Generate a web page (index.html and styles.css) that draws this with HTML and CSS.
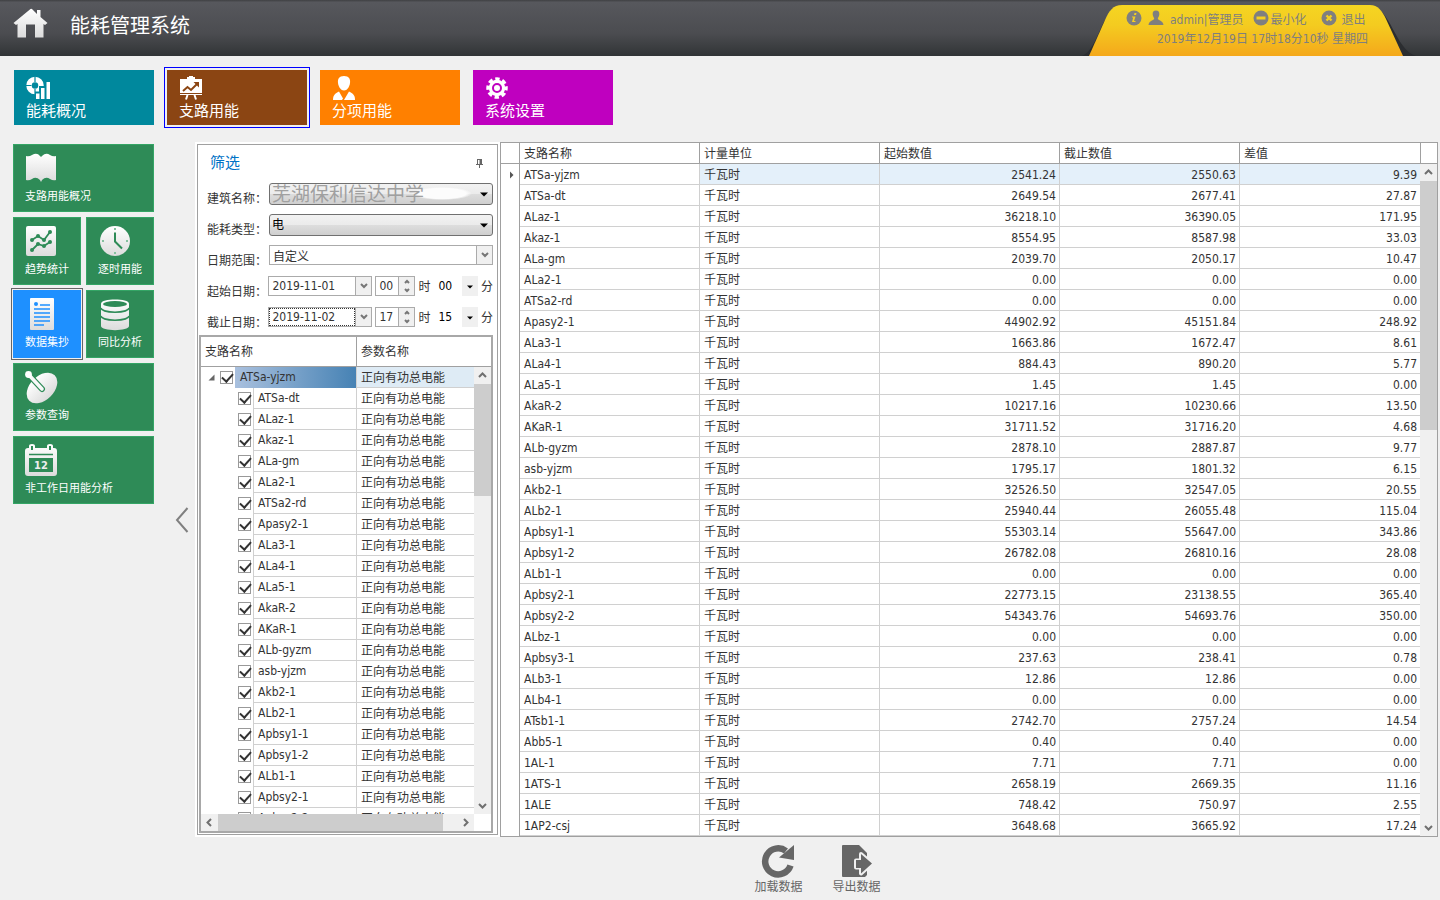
FILE: index.html
```html
<!DOCTYPE html>
<html lang="zh-CN">
<head>
    <meta charset="UTF-8">
    <meta name="viewport" content="width=device-width, initial-scale=1.0">
    <title>能耗管理系统</title>
    <link rel="stylesheet" href="styles.css">
</head>
<body>
    <svg class="defs" width="0" height="0">
        <defs>
            <linearGradient id="silver" x1="0" y1="0" x2="0" y2="1">
                <stop offset="0" stop-color="#ffffff"/>
                <stop offset="1" stop-color="#dcdcdc"/>
            </linearGradient>
            <linearGradient id="gold" x1="0" y1="0" x2="0" y2="1">
                <stop offset="0" stop-color="#f5d522"/>
                <stop offset="0.4" stop-color="#f4cb20"/>
                <stop offset="1" stop-color="#f4a81b"/>
            </linearGradient>
        </defs>
    </svg>

    <!-- Header -->
    <header class="header">
        <svg class="home" width="36" height="32" viewBox="0 0 36 32">
            <path d="M17.500 1L0.500 15L3 17L4.500 16V29.500H13V16.500H22V29.500H30.500V16L32 17L34.500 15L27.500 9V2H24V6L19.500 1.500Q18.500 0.500 17.500 1Z" fill="url(#silver)"/>
        </svg>
        <h1>能耗管理系统</h1>
        <div class="user">
            <svg class="user-bg" width="354" height="51" viewBox="0 0 354 51">
                <path d="M2 51C20 44 20 2 44 0H288C312 2 314 44 336 51Z" fill="#2b2d30"/>
                <path d="M9 51L25 15C29 6 33 0 42 0H290C298 0 302 6 306 14L323 51Z" fill="url(#gold)"/>
            </svg>
            <div class="user-line">
                <svg width="16" height="16" viewBox="0 0 16 16"><circle cx="8" cy="8" r="7.500" fill="#7f7f7f"/><path d="M8.500 3h2l-.5 2H8zM6 6.500h3.500L8 11h1.500v1H6L7.200 7.500H6z" fill="#f4cf21"/></svg>
                <svg width="16" height="16" viewBox="0 0 16 16"><path d="M8 0.500C10.500 0.500 11.500 2 11.300 4.500C11.100 6.500 10 7.500 9.800 8.500C10 10.500 15 10.500 15.500 15H0.500C1 10.500 6 10.500 6.200 8.500C6 7.500 4.900 6.500 4.700 4.500C4.500 2 5.500 0.500 8 0.500Z" fill="#7f7f7f"/></svg>
                <span class="user-name">admin|管理员</span>
                <button class="user-btn">
                    <svg width="16" height="16" viewBox="0 0 16 16"><circle cx="8" cy="8" r="7.500" fill="#7f7f7f"/><path d="M3.500 6.500h9v3h-9z" fill="#f4cf21"/></svg>最小化
                </button>
                <button class="user-btn exit">
                    <svg width="16" height="16" viewBox="0 0 16 16"><circle cx="8" cy="8" r="7.500" fill="#7f7f7f"/><path d="M5.500 5.500l5 5M10.500 5.500l-5 5" stroke="#f4cf21" stroke-width="2.400"/></svg>退出
                </button>
            </div>
            <div class="user-date">2019年12月19日 17时18分10秒 星期四</div>
        </div>
    </header>

    <!-- Top tiles -->
    <nav class="nav">
        <button class="nav-tile teal">
            <svg width="26" height="24" viewBox="0 0 26 24">
                <circle cx="9" cy="9.500" r="6" fill="none" stroke="#fff" stroke-width="5.500"/>
                <path d="M9 0V6M0 9.500H5.500M9 13V19" stroke="#00889d" stroke-width="1.200"/>
                <path d="M9 24V15.500H13V10H18V5H26V24Z" fill="#00889d"/>
                <path d="M10 17.500h3.500V23H10zM15 12h3.500v11H15zM20.500 6H24v17h-3.500z" fill="#fff"/>
            </svg>
            能耗概况
        </button>
        <button class="nav-tile brown active">
            <svg width="26" height="24" viewBox="0 0 26 24">
                <path d="M10 0h4v1h2v2h7v16H1V3h7V1h2z" fill="#fff"/>
                <path d="M4 15l4.500-4 3.500 3 6-6" fill="none" stroke="#8b4513" stroke-width="2"/>
                <path d="M14.500 6h5.500v5.500z" fill="#8b4513"/>
                <path d="M1 17.500h22" stroke="#8b4513"/>
                <path d="M8.500 19L7 23.500M15.500 19L17 23.500" stroke="#fff" stroke-width="2"/>
            </svg>
            支路用能
        </button>
        <button class="nav-tile orange">
            <svg width="26" height="24" viewBox="0 0 26 24">
                <path d="M12 0C17 0 18.500 3 18 7C17.500 11 15 14.500 12 14.500S6.500 11 6 7C5.500 3 7 0 12 0Z" fill="#fff"/>
                <path d="M7 15.500L11 22.500L10 24H1C1 19 3 17.500 7 15.500ZM17 15.500L12 24H23C23 19 21 17.500 17 15.500Z" fill="#fff"/>
            </svg>
            分项用能
        </button>
        <button class="nav-tile purple">
            <svg width="26" height="24" viewBox="0 0 26 24">
                <circle cx="12" cy="12" r="9" fill="none" stroke="#fff" stroke-width="3.500" stroke-dasharray="4.270 2.800" stroke-dashoffset="2"/>
                <circle cx="12" cy="12" r="8.200" fill="#fff"/>
                <circle cx="12" cy="12" r="4" fill="none" stroke="#bf00bf" stroke-width="2"/>
            </svg>
            系统设置
        </button>
    </nav>

    <main class="content">
        <!-- Side menu -->
        <aside class="side">
            <button class="tile wide">
                <svg width="34" height="34" viewBox="0 0 34 34"><path d="M1 4Q4 5 7 3Q12 0 15 4L16 5L17 4Q21 0 25 3Q28 5 31 4V28Q28 29 25 27Q21 24 17 28L16 30L15 28Q11 24 7 27Q4 29 1 28Z" fill="url(#silver)"/></svg>
                支路用能概况
            </button>
            <button class="tile">
                <svg width="34" height="34" viewBox="0 0 34 34">
                    <rect x="1" y="1" width="30" height="30" rx="2" fill="url(#silver)"/>
                    <path d="M7 15L13 11L19 15L25 7M7 25L13 19L19 21L25 17" fill="none" stroke="#2e8b57" stroke-width="1.800"/>
                    <path d="M7 15h.01M13 11h.01M19 15h.01M25 7h.01M7 25h.01M13 19h.01M19 21h.01M25 17h.01" stroke="#2e8b57" stroke-width="4" stroke-linecap="round"/>
                </svg>
                趋势统计
            </button>
            <button class="tile">
                <svg width="34" height="34" viewBox="0 0 34 34">
                    <circle cx="17" cy="16" r="15" fill="url(#silver)"/>
                    <path d="M17 7.500V16.500L24 23.500" fill="none" stroke="#2e8b57" stroke-width="2"/>
                    <path d="M16 3h2v2h-2zM16 27h2v2h-2zM4 15h2v2H4zM28 15h2v2h-2z" fill="#85c19f"/>
                </svg>
                逐时用能
            </button>
            <button class="tile active">
                <svg width="34" height="34" viewBox="0 0 34 34">
                    <rect x="5" y="0" width="24" height="32" rx="1" fill="url(#silver)"/>
                    <circle cx="11" cy="6" r="2" fill="#1e90ff"/>
                    <path d="M15 7h10M9 11h16M9 15h16M9 19h16M9 23h16M9 27h10" stroke="#1e90ff" stroke-width="1.500"/>
                </svg>
                数据集抄
            </button>
            <button class="tile">
                <svg width="34" height="34" viewBox="0 0 34 34">
                    <path d="M3 5.500C3 0 31 0 31 5.500V28C31 33.500 3 33.500 3 28Z" fill="url(#silver)"/>
                    <ellipse cx="17" cy="6" rx="12" ry="3" fill="#2e8b57"/>
                    <path d="M3 10C4 15.500 30 15.500 31 10M3 18C4 23.500 30 23.500 31 18" fill="none" stroke="#2e8b57" stroke-width="1.500"/>
                </svg>
                同比分析
            </button>
            <button class="tile wide">
                <svg width="34" height="34" viewBox="0 0 34 34">
                    <ellipse cx="17" cy="17" rx="18" ry="12" transform="rotate(-45 17 17)" fill="url(#silver)"/>
                    <path d="M3.500 3.500L17 18" stroke="#2e8b57" stroke-width="6" stroke-linecap="round"/>
                    <path d="M3.500 3.500L17 18" stroke="#f8f8f8" stroke-width="3.600" stroke-linecap="round"/>
                    <circle cx="3.500" cy="3.500" r="3.400" fill="#fff"/>
                </svg>
                参数查询
            </button>
            <button class="tile wide">
                <svg width="34" height="34" viewBox="0 0 34 34">
                    <path d="M3 4H4V2Q4 0 7 0T10 2V4H22V2Q22 0 25 0T28 2V4H29Q32 4 32 7V29Q32 32 29 32H3Q0 32 0 29V7Q0 4 3 4Z" fill="url(#silver)"/>
                    <path d="M4 10.500H28" stroke="#2e8b57" stroke-width="1.500"/>
                    <path d="M6 2h2v4H6zM24 2h2v4h-2zM4 14H28V28H4Z" fill="#2e8b57"/>
                    <text class="cal" x="16" y="25" text-anchor="middle">12</text>
                </svg>
                非工作日用能分析
            </button>
        </aside>
        <button class="collapse" aria-label="收起">
            <svg width="14" height="26" viewBox="0 0 14 26"><path d="M12.500 1L2 13L12.500 25" fill="none" stroke="#808080" stroke-width="2"/></svg>
        </button>

        <div class="work">
            <div class="panels">
                <!-- Filter -->
                <section class="filter">
                    <div class="filter-head">
                        <h2>筛选</h2>
                        <svg width="9" height="11" viewBox="0 0 9 11"><path d="M2 1.500h5M2.500 1v5M1 6.500h7M4.500 6v4" fill="none" stroke="#666"/><path d="M4.500 1H7v5H4.500z" fill="#666"/></svg>
                    </div>
                    <form class="form">
                        <div class="row">
                            <label for="building">建筑名称：</label>
                            <div class="select">
                                <select id="building" class="building"><option>芜湖保利信达中学</option></select>
                                <svg width="8" height="5" viewBox="0 0 8 5"><path d="M0 0.500h8L4 4.500z"/></svg>
                            </div>
                        </div>
                        <div class="row">
                            <label for="energy">能耗类型：</label>
                            <div class="select">
                                <select id="energy"><option>电</option></select>
                                <svg width="8" height="5" viewBox="0 0 8 5"><path d="M0 0.500h8L4 4.500z"/></svg>
                            </div>
                        </div>
                        <div class="row">
                            <label for="range">日期范围：</label>
                            <div class="box grow">
                                <input type="text" id="range" value="自定义">
                                <button type="button" class="drop" aria-label="选择"><svg width="8" height="6" viewBox="0 0 8 6"><path d="M1 1l3 3 3-3"/></svg></button>
                            </div>
                        </div>
                        <div class="row">
                            <label for="start">起始日期：</label>
                            <div class="box date">
                                <input type="text" id="start" value="2019-11-01">
                                <button type="button" class="drop" aria-label="选择"><svg width="8" height="6" viewBox="0 0 8 6"><path d="M1 1l3 3 3-3"/></svg></button>
                            </div>
                            <div class="box hour">
                                <input type="text" id="startHour" value="00" aria-label="时">
                                <button type="button" class="drop" aria-label="调整"><svg width="8" height="14" viewBox="0 0 8 14"><path d="M2 4l2-2 2 2M2 10l2 2 2-2"/></svg></button>
                            </div>
                            <span class="unit">时</span>
                            <div class="minute">
                                <select id="startMin" aria-label="分"><option>00</option></select>
                                <svg width="6" height="4" viewBox="0 0 6 4"><path d="M0 0.500h6L3 3.500z"/></svg>
                            </div>
                            <span class="unit">分</span>
                        </div>
                        <div class="row">
                            <label for="end">截止日期：</label>
                            <div class="box date">
                                <input type="text" id="end" class="focused" value="2019-11-02">
                                <button type="button" class="drop" aria-label="选择"><svg width="8" height="6" viewBox="0 0 8 6"><path d="M1 1l3 3 3-3"/></svg></button>
                            </div>
                            <div class="box hour">
                                <input type="text" id="endHour" value="17" aria-label="时">
                                <button type="button" class="drop" aria-label="调整"><svg width="8" height="14" viewBox="0 0 8 14"><path d="M2 4l2-2 2 2M2 10l2 2 2-2"/></svg></button>
                            </div>
                            <span class="unit">时</span>
                            <div class="minute">
                                <select id="endMin" aria-label="分"><option>15</option></select>
                                <svg width="6" height="4" viewBox="0 0 6 4"><path d="M0 0.500h6L3 3.500z"/></svg>
                            </div>
                            <span class="unit">分</span>
                        </div>
                    </form>

                    <!-- Branch tree -->
                    <div class="tree">
                        <div class="tree-body">
                            <table class="tree-table">
                                <thead>
                                    <tr><th class="branch">支路名称</th><th>参数名称</th></tr>
                                </thead>
                                <tbody id="treeRows"></tbody>
                            </table>
                            <div class="scroll-col">
                                <div class="cap"></div>
                                <div class="vbar">
                                    <svg width="9" height="6" viewBox="0 0 9 6"><path d="M1 5l3.500-3.500L8 5"/></svg>
                                    <div class="track"><div class="thumb tree-thumb"></div></div>
                                    <svg width="9" height="6" viewBox="0 0 9 6"><path d="M1 1l3.500 3.500L8 1"/></svg>
                                </div>
                            </div>
                        </div>
                        <div class="hbar">
                            <svg width="6" height="9" viewBox="0 0 6 9"><path d="M5 1L1.500 4.500L5 8"/></svg>
                            <div class="track"><div class="thumb"></div></div>
                            <svg width="6" height="9" viewBox="0 0 6 9"><path d="M1 1l3.500 3.500L1 8"/></svg>
                        </div>
                    </div>
                </section>

                <!-- Data table -->
                <section class="data">
                    <table class="data-table">
                        <thead>
                            <tr><th class="mark"></th><th>支路名称</th><th>计量单位</th><th>起始数值</th><th>截止数值</th><th>差值</th></tr>
                        </thead>
                        <tbody id="dataRows"></tbody>
                    </table>
                    <div class="scroll-col">
                        <div class="cap"></div>
                        <div class="vbar">
                            <svg width="9" height="6" viewBox="0 0 9 6"><path d="M1 5l3.500-3.500L8 5"/></svg>
                            <div class="track"><div class="thumb data-thumb"></div></div>
                            <svg width="9" height="6" viewBox="0 0 9 6"><path d="M1 1l3.500 3.500L8 1"/></svg>
                        </div>
                    </div>
                </section>
            </div>

            <!-- Actions -->
            <footer class="actions">
                <button class="action">
                    <svg width="34" height="34" viewBox="0 0 34 34">
                        <path d="M29.500 21.500A13 13 0 1 1 25 7" fill="none" stroke="#666" stroke-width="6.500"/>
                        <path d="M33 1V16L18 13.500Z" fill="#666"/>
                    </svg>
                    加载数据
                </button>
                <button class="action">
                    <svg width="34" height="34" viewBox="0 0 34 34">
                        <path d="M3 1H19L27 9V31L25 33H3Q2 33 2 32V2Q2 1 3 1Z" fill="#666"/>
                        <path d="M16 16.500H21V10L32 19.500L21 29.500V23.500H16Z" fill="#666" stroke="#f0f0f0" stroke-width="4" stroke-linejoin="round"/>
                        <path d="M16 16H21V10L32 19.500L21 29.500V24H16Z" fill="#666"/>
                    </svg>
                    导出数据
                </button>
            </footer>
        </div>
    </main>

    <script src="script.js"></script>
</body>
</html>
```
FILE: styles.css
```css
* {
    box-sizing: border-box;
}
body {
    display: flex;
    flex-direction: column;
    height: 100vh;
    margin: 0;
    overflow: hidden;
    background: #f0f0f0;
    color: #333;
    font: 12px "DejaVu Sans Condensed", "Noto Sans CJK SC", sans-serif;
}
.defs {
    position: absolute;
}
button, input, select {
    margin: 0;
    padding: 0;
    border: 0;
    border-radius: 0;
    background: none;
    color: inherit;
    font: inherit;
}
svg {
    display: block;
    flex: none;
}

/* header */
.header {
    display: flex;
    flex: none;
    height: 56px;
    padding-left: 13px;
    background: linear-gradient(#3f4043, #57585d 4%, #4b4c50 60%, #313436);
}
.home {
    margin-top: 8px;
}
h1 {
    margin: 0 0 0 21px;
    color: #fff;
    font-size: 20px;
    font-weight: normal;
    line-height: 52px;
}
.user {
    position: relative;
    width: 354px;
    margin: 5px 6px 0 auto;
    color: #7f7f7f;
}
.user-bg {
    position: absolute;
    left: 0;
    top: 0;
}
.user-line {
    position: relative;
    display: flex;
    align-items: center;
    gap: 6px;
    height: 24px;
    padding: 2px 0 0 46px;
}
.user-name {
    margin-right: 4px;
}
.user-btn {
    display: flex;
    align-items: center;
    gap: 1px;
}
.exit {
    gap: 5px;
    margin-left: 8px;
}
.user-date {
    position: relative;
    padding-left: 77px;
    line-height: 20px;
}

/* top tiles */
.nav {
    display: flex;
    flex: none;
    gap: 13px;
    height: 86px;
    padding: 14px 14px 17px;
}
.nav-tile {
    width: 140px;
    height: 55px;
    padding: 2px 12px 0;
    color: #fff;
    font-size: 15px;
    line-height: 22px;
    text-align: left;
}
.teal { background: #00889d; }
.brown { background: #8b4513; }
.orange { background: #ff8000; }
.purple { background: #bf00bf; }
.nav-tile.active {
    outline: 1px solid #00f;
    outline-offset: 2px;
}

/* side menu */
.content {
    display: flex;
    flex: 1;
    min-height: 0;
}
.side {
    display: grid;
    grid-template-columns: 68px 68px;
    grid-auto-rows: 68px;
    gap: 5px;
    width: 154px;
    padding: 2px 0 0 13px;
}
.tile {
    padding: 1px 11px 0;
    border: 1px solid #34a565;
    background: #2e8b57;
    color: #fff;
    font-size: 11px;
    line-height: 18px;
    text-align: left;
    white-space: nowrap;
}
.tile svg {
    margin-bottom: 2px;
}
.wide {
    grid-column: span 2;
}
.tile.active {
    border-color: #1e90ff;
    background: #1e90ff;
    outline: 1px solid #666;
    outline-offset: 1px;
}
.cal {
    fill: #eee;
    font: bold 11px "DejaVu Sans Condensed", sans-serif;
}
.collapse {
    width: 41px;
    padding: 0 0 3px 21px;
}

/* filter panel */
.work {
    display: flex;
    flex: 1;
    flex-direction: column;
    min-width: 0;
}
.panels {
    display: flex;
    flex: 1;
    gap: 2px;
    min-height: 0;
    padding-right: 2px;
}
.filter {
    display: flex;
    flex-direction: column;
    width: 301px;
    margin: 2px 0 2px 2px;
    padding: 0 1px 1px;
    border: 1px solid #a0a0a0;
    background: #fff;
    outline: 2px solid #fff;
}
.filter-head {
    display: flex;
    flex: none;
    align-items: center;
    justify-content: space-between;
    height: 38px;
    padding: 0 12px 2px 11px;
}
h2 {
    margin: 0;
    color: #0072c6;
    font-size: 15px;
    font-weight: normal;
    line-height: 22px;
}
.form {
    display: flex;
    flex: none;
    flex-direction: column;
    gap: 9px;
    padding: 0 3px 6px 8px;
}
.row {
    display: flex;
    height: 22px;
}
.row label {
    width: 62px;
    line-height: 32px;
    white-space: nowrap;
}
.select {
    position: relative;
    flex: 1;
}
.select select {
    appearance: none;
    width: 100%;
    height: 22px;
    padding-left: 2px;
    border: 1px solid #707070;
    border-radius: 3px;
    background: linear-gradient(#f2f2f2, #ebebeb 50%, #ddd 51%, #cfcfcf);
    color: #000;
}
.select .building {
    background: radial-gradient(closest-side, #fcfcfc 80%, transparent) 142px 3px / 60px 13px no-repeat, linear-gradient(#f2f2f2, #ebebeb 50%, #ddd 51%, #cfcfcf);
    color: #a0a0a0;
    font-size: 19px;
    line-height: 20px;
}
.select svg {
    position: absolute;
    right: 5px;
    top: 9px;
    pointer-events: none;
}
.box {
    display: flex;
    height: 20px;
    border: 1px solid #ababab;
    background: #fff;
}
.box input {
    flex: 1;
    min-width: 0;
    padding-left: 3px;
}
.box .focused {
    outline: 1px dotted #333;
    outline-offset: -1px;
}
.grow {
    flex: 1;
}
.date {
    width: 104px;
}
.hour {
    width: 40px;
    margin-left: 3px;
}
.drop {
    display: flex;
    align-items: center;
    justify-content: center;
    width: 16px;
    border-left: 1px solid #ababab;
    background: #f0f0f0;
}
.drop path {
    fill: none;
    stroke: #777;
    stroke-width: 2;
}
.unit {
    margin-left: 3px;
    line-height: 22px;
}
.minute {
    position: relative;
    width: 45px;
    margin-left: 3px;
}
.minute select {
    appearance: none;
    width: 100%;
    height: 20px;
    padding-left: 5px;
    background: linear-gradient(90deg, transparent 29px, #f0f0f0 29px);
    color: #000;
}
.minute svg {
    position: absolute;
    right: 5px;
    top: 9px;
    pointer-events: none;
}

/* tree */
.tree {
    display: flex;
    flex: 1;
    flex-direction: column;
    min-height: 0;
    margin-right: 3px;
    border: 2px solid #a8a8a8;
}
.tree-body {
    display: flex;
    flex: 1;
    min-height: 0;
    overflow: hidden;
}
table {
    flex: 1;
    width: 100%;
    min-width: 0;
    align-self: flex-start;
    table-layout: fixed;
    border-collapse: separate;
    border-spacing: 0;
}
th {
    height: 21px;
    padding: 1px 4px 0;
    border-right: 1px solid #a0a0a0;
    border-bottom: 1px solid #a0a0a0;
    font-weight: normal;
    line-height: 18px;
    text-align: left;
}
td {
    height: 21px;
    padding: 2px 3px 0 4px;
    border-right: 1px solid #d0d0d0;
    border-bottom: 1px solid #d0d0d0;
    line-height: 18px;
    white-space: nowrap;
}
td:last-child, th:last-child {
    border-right: 0;
}
.tree-table th {
    height: 30px;
}
.branch {
    width: 156px;
}
.tree-table .leaf {
    padding: 0;
    border-bottom: 0;
}
.leaf label {
    display: flex;
    align-items: center;
    height: 21px;
    padding-left: 37px;
}
.leaf span {
    flex: 1;
    height: 21px;
    margin-left: 2px;
    padding-left: 4px;
    border-left: 1px solid #d0d0d0;
    border-bottom: 1px solid #d0d0d0;
    line-height: 21px;
}
.leaf input {
    appearance: none;
    flex: none;
    width: 13px;
    height: 13px;
    border: 1px solid #999;
}
.leaf input:checked::after {
    content: "";
    display: block;
    width: 9px;
    height: 5px;
    margin: 2px 0 0 1px;
    border: solid #333;
    border-width: 0 0 2px 2px;
    transform: translateY(-1px) rotate(-48deg);
}
.root label {
    padding-left: 7px;
}
.root label svg {
    margin-right: 5px;
}
.root span {
    border-color: transparent;
    background: linear-gradient(90deg, #a9c0de, #4682b4) border-box;
}
.root td:last-child {
    background: #deebf5;
}

/* scrollbars */
.scroll-col {
    display: flex;
    flex: none;
    flex-direction: column;
    width: 17px;
}
.cap {
    flex: none;
    height: 21px;
    border-bottom: 1px solid #a0a0a0;
}
.data .cap {
    border-left: 1px solid #a0a0a0;
}
.tree .cap {
    height: 30px;
}
.vbar, .hbar {
    display: flex;
    align-items: center;
    justify-content: space-between;
    background: #f0f0f0;
}
.vbar {
    flex: 1;
    flex-direction: column;
    padding: 5px 0;
}
.hbar {
    height: 17px;
    margin-right: 17px;
    padding: 0 5px;
}
.track {
    flex: 1;
}
.vbar .track {
    width: 17px;
    margin: 6px 0;
}
.hbar .track {
    height: 17px;
    margin: 0 6px;
}
.vbar path, .hbar path {
    fill: none;
    stroke: #707070;
    stroke-width: 2;
}
.thumb {
    background: #cdcdcd;
}
.tree-thumb {
    height: 27%;
}
.data-thumb {
    height: 39%;
}
.hbar .thumb {
    width: 94%;
    height: 17px;
}

/* data table */
.data {
    display: flex;
    flex: 1;
    min-width: 0;
    border: 1px solid #a0a0a0;
    background: #fff;
    overflow: hidden;
}
.mark {
    width: 19px;
}
.data-table td:first-child {
    padding: 0 0 0 8px;
    border-right-color: #a0a0a0;
    border-bottom: 0;
}
.num {
    text-align: right;
}
.current td:nth-child(n+3) {
    background: #e4f0fa;
}

/* actions */
.actions {
    display: flex;
    flex: none;
    justify-content: center;
    gap: 30px;
    height: 63px;
    padding-top: 7px;
}
.action {
    display: flex;
    flex-direction: column;
    align-items: center;
    height: 52px;
    color: #666;
    line-height: 18px;
}
```
FILE: script.js
```js
// name, start, end, difference
const rows = [
    ["ATSa-yjzm", "2541.24", "2550.63", "9.39"],
    ["ATSa-dt", "2649.54", "2677.41", "27.87"],
    ["ALaz-1", "36218.10", "36390.05", "171.95"],
    ["Akaz-1", "8554.95", "8587.98", "33.03"],
    ["ALa-gm", "2039.70", "2050.17", "10.47"],
    ["ALa2-1", "0.00", "0.00", "0.00"],
    ["ATSa2-rd", "0.00", "0.00", "0.00"],
    ["Apasy2-1", "44902.92", "45151.84", "248.92"],
    ["ALa3-1", "1663.86", "1672.47", "8.61"],
    ["ALa4-1", "884.43", "890.20", "5.77"],
    ["ALa5-1", "1.45", "1.45", "0.00"],
    ["AkaR-2", "10217.16", "10230.66", "13.50"],
    ["AKaR-1", "31711.52", "31716.20", "4.68"],
    ["ALb-gyzm", "2878.10", "2887.87", "9.77"],
    ["asb-yjzm", "1795.17", "1801.32", "6.15"],
    ["Akb2-1", "32526.50", "32547.05", "20.55"],
    ["ALb2-1", "25940.44", "26055.48", "115.04"],
    ["Apbsy1-1", "55303.14", "55647.00", "343.86"],
    ["Apbsy1-2", "26782.08", "26810.16", "28.08"],
    ["ALb1-1", "0.00", "0.00", "0.00"],
    ["Apbsy2-1", "22773.15", "23138.55", "365.40"],
    ["Apbsy2-2", "54343.76", "54693.76", "350.00"],
    ["ALbz-1", "0.00", "0.00", "0.00"],
    ["Apbsy3-1", "237.63", "238.41", "0.78"],
    ["ALb3-1", "12.86", "12.86", "0.00"],
    ["ALb4-1", "0.00", "0.00", "0.00"],
    ["ATsb1-1", "2742.70", "2757.24", "14.54"],
    ["Abb5-1", "0.40", "0.40", "0.00"],
    ["1AL-1", "7.71", "7.71", "0.00"],
    ["1ATS-1", "2658.19", "2669.35", "11.16"],
    ["1ALE", "748.42", "750.97", "2.55"],
    ["1AP2-csj", "3648.68", "3665.92", "17.24"]
];

const expander = '<svg width="7" height="7" viewBox="0 0 7 7"><path d="M6.500 0.500v6h-6z" fill="#666"/></svg>';
const marker = '<svg width="5" height="8" viewBox="0 0 5 8"><path d="M1 0.500L4.500 4L1 7.500z" fill="#555"/></svg>';

// Branch tree, the first row is the parent
document.getElementById("treeRows").innerHTML = rows.slice(0, 22).map((row, i) =>
    `<tr class="${i === 0 ? 'root' : ''}">
        <td class="leaf"><label>${i === 0 ? expander : ''}<input type="checkbox" checked><span>${row[0]}</span></label></td>
        <td>正向有功总电能</td>
    </tr>`).join('');

// Readings
document.getElementById("dataRows").innerHTML = rows.map((row, i) =>
    `<tr class="${i === 0 ? 'current' : ''}">
        <td>${i === 0 ? marker : ''}</td>
        <td>${row[0]}</td>
        <td>千瓦时</td>
        <td class="num">${row[1]}</td>
        <td class="num">${row[2]}</td>
        <td class="num">${row[3]}</td>
    </tr>`).join('');
```
